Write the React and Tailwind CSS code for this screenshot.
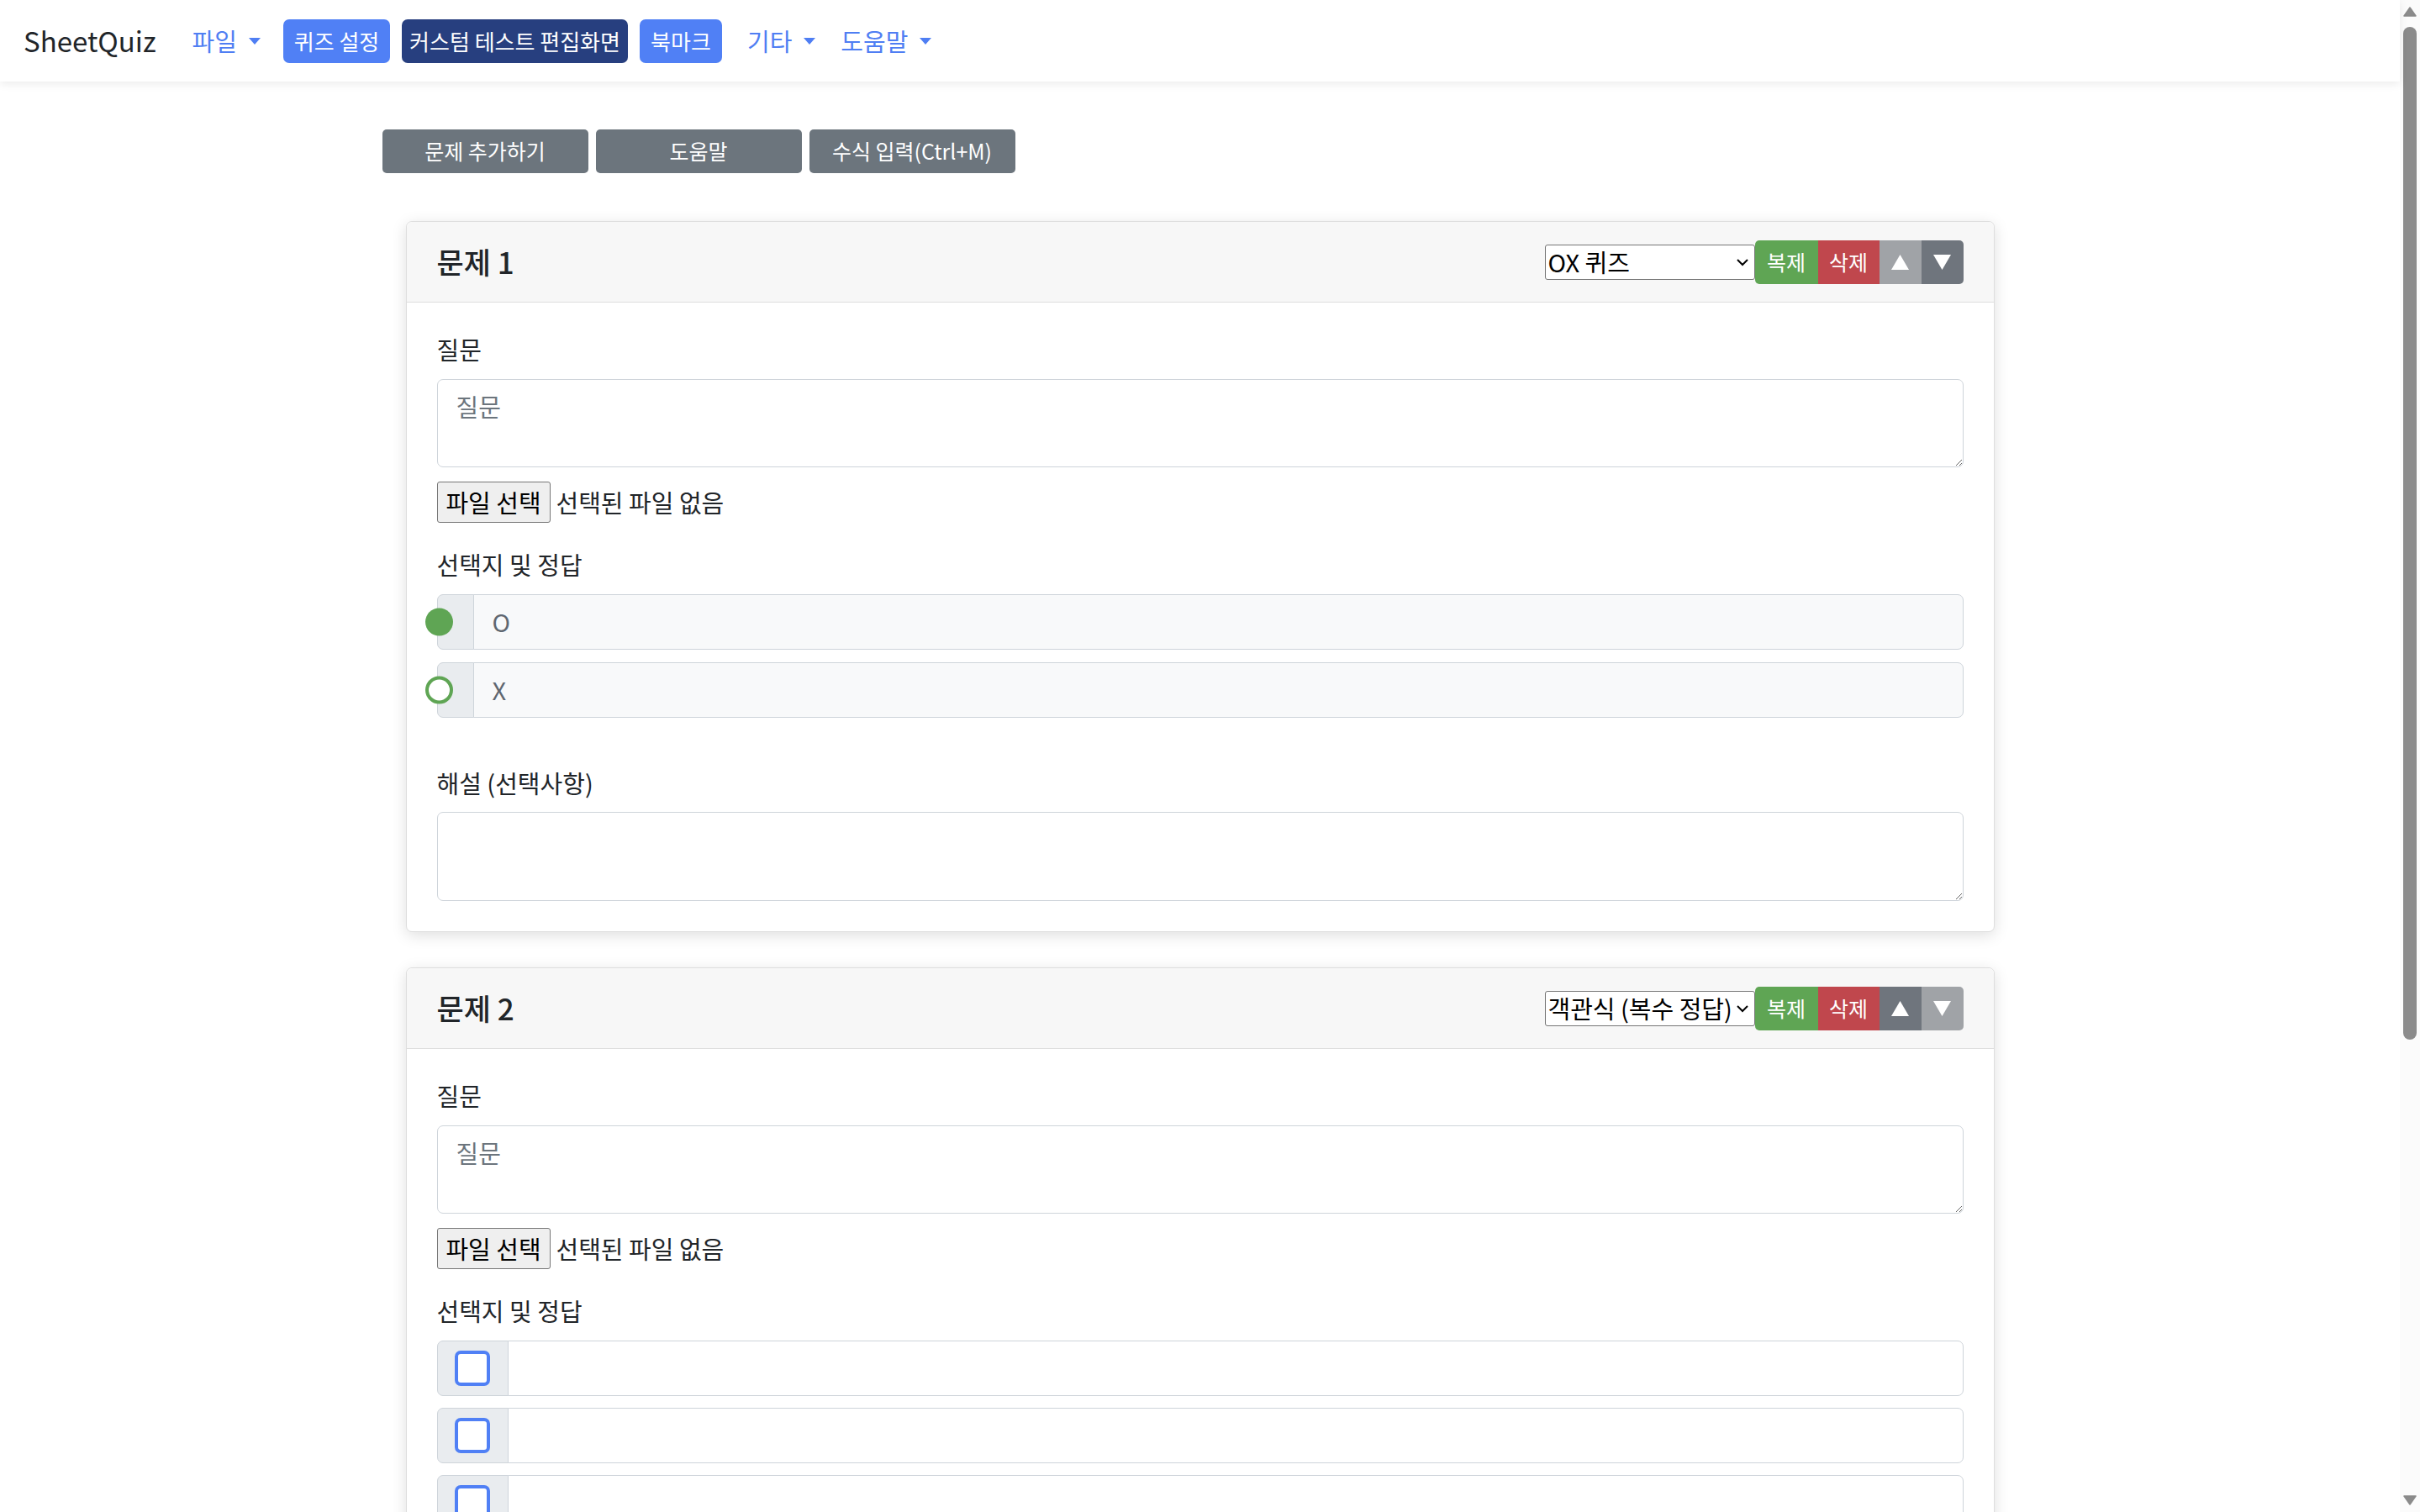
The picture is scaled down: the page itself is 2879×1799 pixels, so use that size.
import React from 'react';

const FONT = "font-['Noto_Sans_CJK_KR','Noto_Sans',sans-serif]";

function Caret() {
  return <span className="ml-[14px] inline-block h-0 w-0 border-x-[7px] border-t-[8px] border-x-transparent border-t-[#4f7ef3]" />;
}

function Tri({ up }) {
  return (
    <svg width="21" height="18" viewBox="0 0 21 18">
      <path d={up ? 'M10.5 0L21 18H0z' : 'M0 0h21L10.5 18z'} fill="white" />
    </svg>
  );
}

function Label({ children, className = '' }) {
  return <div className={`text-[29px] leading-[43px] text-[#212529] ${className}`}>{children}</div>;
}

function FileRow() {
  return (
    <div className="mt-[17px] flex h-[49px] items-center">
      <div className="flex h-[49px] w-[135px] items-center justify-center rounded-[3px] border border-[#767676] bg-[#efefef] text-[29px] text-black">
        파일 선택
      </div>
      <span className="ml-[7px] text-[29px] text-[#212529]">선택된 파일 없음</span>
    </div>
  );
}

function OxRow({ value, checked }) {
  return (
    <div className="flex h-[66px]">
      <div className="relative w-[44px] shrink-0 rounded-l-[7px] border border-[#ced4da] bg-[#e9ecef]">
        <span
          className={`absolute left-[-15px] top-1/2 h-[33px] w-[33px] -translate-y-1/2 rounded-full ${
            checked ? 'bg-[#5fa554]' : 'border-[4px] border-[#5fa554] bg-white'
          }`}
        />
      </div>
      <div className="-ml-px flex flex-1 items-center rounded-r-[7px] border border-[#ced4da] bg-[#f8f9fa] px-[22px] text-[29px] text-[#5f6770]">
        {value}
      </div>
    </div>
  );
}

function CheckRow() {
  return (
    <div className="flex h-[66px] shrink-0">
      <div className="flex w-[85px] shrink-0 items-center justify-center rounded-l-[7px] border border-[#ced4da] bg-[#e9ecef]">
        <span className="h-[42px] w-[42px] rounded-[7px] border-[4px] border-[#5080f5] bg-white" />
      </div>
      <div className="-ml-px flex-1 rounded-r-[7px] border border-[#ced4da] bg-white" />
    </div>
  );
}

function QuestionCard({ num, type, kind, upOff, downOff, className = '' }) {
  return (
    <div className={`mx-[28px] rounded-[7px] border border-[#dedede] bg-white shadow-[0_4px_18px_rgba(0,0,0,0.13)] ${className}`}>
      <div className="flex h-[96px] items-center justify-between rounded-t-[7px] border-b border-[#dedede] bg-[#f7f7f7] px-[36px]">
        <h5 className="text-[35px] font-medium text-[#212529]">문제 {num}</h5>
        <div className="flex items-center">
          <div className="flex h-[42px] w-[250px] items-center justify-between rounded-[3px] border border-[#767676] bg-white pl-[3px] pr-[6px] text-[29px] text-black">
            <span className="whitespace-nowrap">{type}</span>
            <svg width="16" height="10" viewBox="0 0 16 10">
              <path d="M2 2l6 6 6-6" fill="none" stroke="black" strokeWidth="2" />
            </svg>
          </div>
          <div className="flex h-[52px] overflow-hidden rounded-[5px] text-[25px] text-white">
            <div className="flex w-[75px] items-center justify-center bg-[#5fa554]">복제</div>
            <div className="flex w-[73px] items-center justify-center bg-[#c0474d]">삭제</div>
            <div className={`flex w-[50px] items-center justify-center ${upOff ? 'bg-[#a0a3a7]' : 'bg-[#6f757d]'}`}>
              <Tri up />
            </div>
            <div className={`flex w-[50px] items-center justify-center ${downOff ? 'bg-[#a0a3a7]' : 'bg-[#6f757d]'}`}>
              <Tri />
            </div>
          </div>
        </div>
      </div>
      <div className="px-[36px] pb-[36px] pt-[34px]">
        <Label className="mb-[14px]">질문</Label>
        <textarea
          placeholder="질문"
          className="block h-[105px] w-full rounded-[7px] border border-[#ced4da] px-[22px] py-[10px] text-[29px] leading-[43px] text-[#212529] outline-none placeholder:text-[#6c757d]"
        />
        <FileRow />
        <Label className="mb-[14px] mt-[28px]">선택지 및 정답</Label>
        {kind === 'ox' ? (
          <>
            <div className="flex flex-col gap-[15px]">
              <OxRow value="O" checked />
              <OxRow value="X" />
            </div>
            <Label className="mb-[13px] mt-[56px]">해설 (선택사항)</Label>
            <textarea className="block h-[106px] w-full rounded-[7px] border border-[#ced4da] px-[22px] py-[10px] text-[29px] leading-[43px] outline-none" />
          </>
        ) : (
          <div className="flex flex-col gap-[14px]">
            <CheckRow />
            <CheckRow />
            <CheckRow />
            <CheckRow />
          </div>
        )}
      </div>
    </div>
  );
}

function Scrollbar() {
  return (
    <div className="flex w-[24px] shrink-0 flex-col items-center bg-[#fbfbfb] pb-[8px] pt-[8px]">
      <svg width="16" height="12" viewBox="0 0 16 12">
        <path d="M8 1L15 11H1z" fill="#8b8b8b" stroke="#8b8b8b" strokeLinejoin="round" strokeWidth="1.5" />
      </svg>
      <div className="mt-[12px] h-[1205px] w-[16px] rounded-full bg-[#8b8b8b]" />
      <div className="flex-1" />
      <svg width="16" height="12" viewBox="0 0 16 12">
        <path d="M1 1h14L8 11z" fill="#8b8b8b" stroke="#8b8b8b" strokeLinejoin="round" strokeWidth="1.5" />
      </svg>
    </div>
  );
}

export default function App() {
  return (
    <div className={`flex h-[1799px] w-[2879px] overflow-hidden bg-white ${FONT}`}>
      <div className="flex min-w-0 flex-1 flex-col">
        {/* Navbar */}
        <nav className="relative z-10 flex h-[97px] shrink-0 items-center bg-white pl-[28px] shadow-[0_3px_10px_rgba(0,0,0,0.08)]">
          <span className="text-[33px] text-[#212529]">SheetQuiz</span>
          <div className="ml-[43px] flex items-center text-[29px] text-[#4f7ef3]">
            <span className="flex items-center">파일<Caret /></span>
            <div className="ml-[27px] flex h-[52px] w-[127px] items-center justify-center rounded-[7px] bg-[#5080f5] text-[26px] text-white">퀴즈 설정</div>
            <div className="ml-[14px] flex h-[52px] w-[269px] items-center justify-center rounded-[7px] bg-[#273f7f] text-[26px] text-white">커스텀 테스트 편집화면</div>
            <div className="ml-[14px] flex h-[52px] w-[98px] items-center justify-center rounded-[7px] bg-[#5080f5] text-[26px] text-white">북마크</div>
            <span className="ml-[30px] flex items-center">기타<Caret /></span>
            <span className="ml-[30px] flex items-center">도움말<Caret /></span>
          </div>
        </nav>

        {/* Content */}
        <div className="mx-auto w-[1946px] pt-[57px]">
          <div className="flex gap-[9px]">
            {['문제 추가하기', '도움말', '수식 입력(Ctrl+M)'].map((t) => (
              <div key={t} className="flex h-[52px] w-[245px] items-center justify-center rounded-[5px] bg-[#6c757d] text-[25px] text-white">
                {t}
              </div>
            ))}
          </div>
          <QuestionCard num={1} type="OX 퀴즈" kind="ox" upOff className="mt-[57px]" />
          <QuestionCard num={2} type="객관식 (복수 정답)" kind="multi" downOff className="mt-[42px]" />
        </div>
      </div>
      <Scrollbar />
    </div>
  );
}
